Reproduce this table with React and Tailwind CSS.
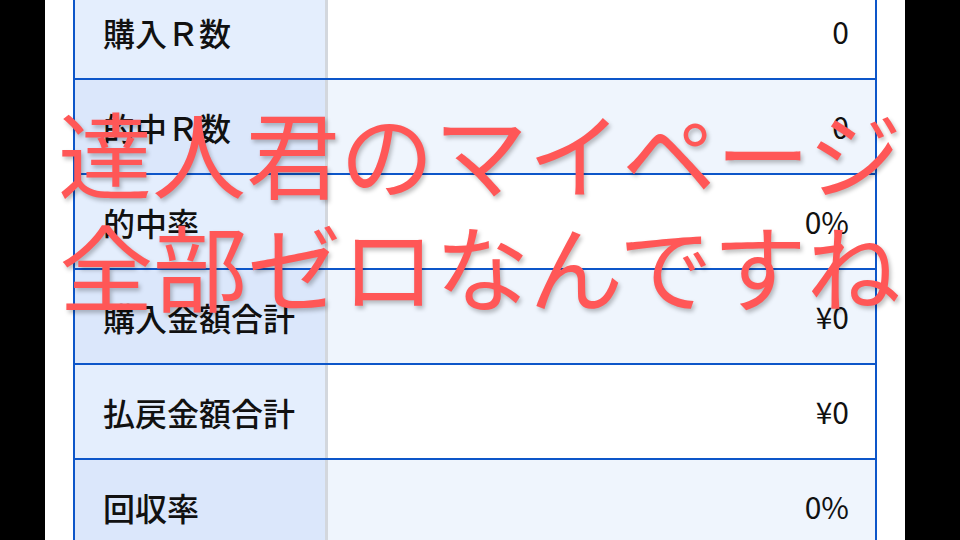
import React from 'react';

const rows = [
  { label: '購入Ｒ数', value: '0' },
  { label: '的中Ｒ数', value: '0' },
  { label: '的中率', value: '0%' },
  { label: '購入金額合計', value: '¥0' },
  { label: '払戻金額合計', value: '¥0' },
  { label: '回収率', value: '0%' },
];

export default function App() {
  return (
    <div
      className="relative w-[960px] h-[540px] overflow-hidden bg-black flex"
      style={{ fontFamily: '"Noto Sans CJK JP", "Noto Sans", sans-serif' }}
    >
      {/* white page */}
      <div className="ml-[45px] w-[860px] h-full bg-white pl-[28px] pr-[28px]">
        <div className="-mt-[15px] border-x-2 border-[#0d56c9]">
          {rows.map((r, i) => {
            const even = i % 2 === 1;
            return (
              <div key={r.label} className="flex h-[95px] border-b-[2px] border-[#0d56c9]">
                <div
                  className={`w-[253px] flex items-center pl-[28px] border-r-[3px] border-[#d3d7dd] text-[32px] font-medium text-[#111] ${even ? 'bg-[#dbe7fb]' : 'bg-[#e4eefd]'}`}
                >
                  {r.label}
                </div>
                <div
                  className={`flex-1 flex items-center justify-end pr-[26px] text-[30px] text-[#111] ${even ? 'bg-[#eff5fd]' : 'bg-white'}`}
                >
                  {r.value}
                </div>
              </div>
            );
          })}
        </div>
      </div>

      {/* caption overlay */}
      <div className="absolute left-0 right-0 top-[95px] flex flex-col items-center text-[94px] leading-[113px] text-[#ff5757] [text-shadow:2px_3px_4px_rgba(0,0,0,0.25)]">
        <div>達人君のマイページ</div>
        <div>全部ゼロなんですね</div>
      </div>
    </div>
  );
}
